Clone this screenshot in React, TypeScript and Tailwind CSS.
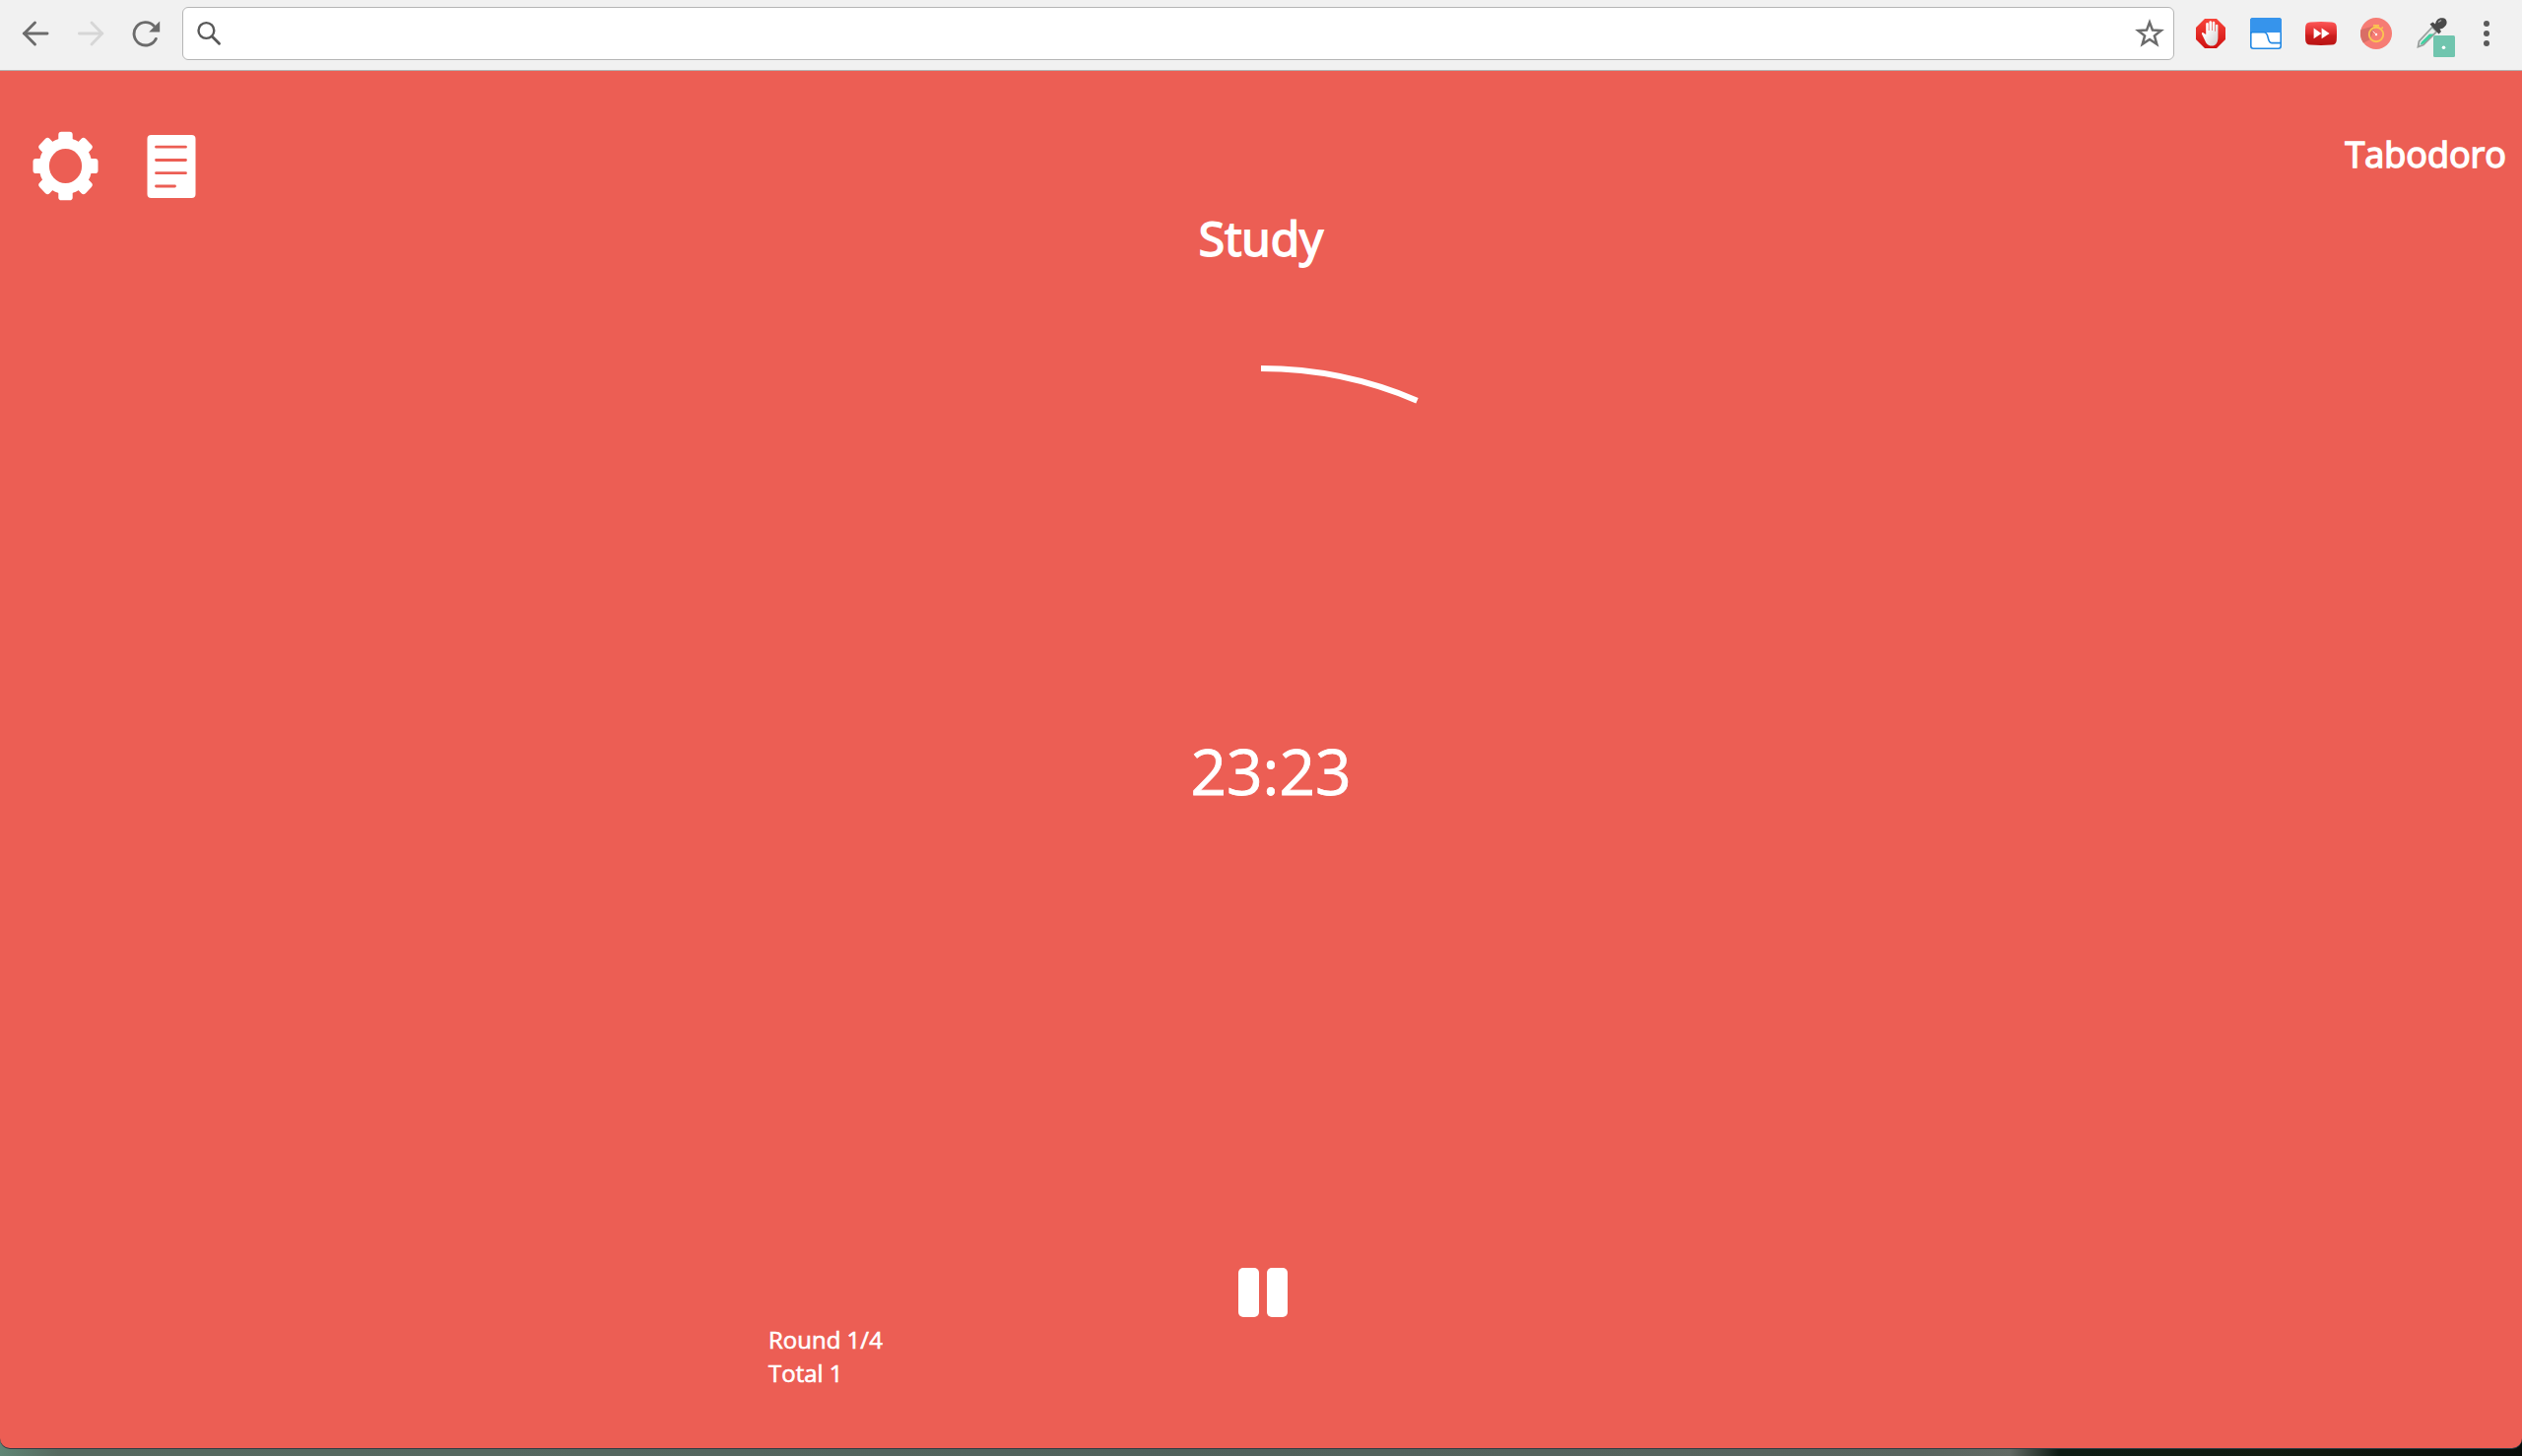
import React from "react";

function NavIcons() {
  return (
    <div className="flex items-center gap-[28px] pl-[22px]">
      <svg width="28" height="28" viewBox="0 0 28 28" fill="none" stroke="#6b6b6b" strokeWidth="2.9">
        <path d="M2.5 14H26" strokeLinecap="round" />
        <path d="M13.5 3L2.6 14L13.5 25" strokeLinecap="round" />
      </svg>
      <svg width="28" height="28" viewBox="0 0 28 28" fill="none" stroke="#d6d6d6" strokeWidth="2.9">
        <path d="M2.4 14H25.5" strokeLinecap="round" />
        <path d="M15 3L25.6 14L15 25" strokeLinecap="round" />
      </svg>
      <svg width="30" height="28" viewBox="0 0 30 28" fill="none">
        <path d="M24.3 19.4A11.7 11.7 0 1 1 22.2 6.2" stroke="#6b6b6b" strokeWidth="2.9" strokeLinecap="round" />
        <path d="M28.2 1.4V12.4H17.2Z" fill="#6b6b6b" />
      </svg>
    </div>
  );
}

function AddressBar() {
  return (
    <div className="ml-[21px] flex h-[54px] w-[2022px] items-center justify-between rounded-md border border-[#b5b5b5] bg-white pr-[9px] pl-[13px]">
      <svg width="26" height="26" viewBox="0 0 26 26" fill="none" stroke="#585858" strokeLinecap="round">
        <circle cx="10.4" cy="10" r="7.9" strokeWidth="2.4" />
        <path d="M16.5 16.2L23.5 23.2" strokeWidth="2.9" />
      </svg>
      <svg width="30" height="30" viewBox="0 0 30 30">
        <path
          d="M15 3.6L18 11.6L26.6 12L19.9 17.4L22.3 25.8L15 21L7.7 25.8L10.1 17.4L3.4 12L12 11.6Z"
          fill="none"
          stroke="#6b6b6b"
          strokeWidth="2.5"
        />
      </svg>
    </div>
  );
}

function Extensions() {
  return (
    <div className="flex items-center pl-[22px]">
      <svg width="30" height="32" viewBox="0 0 30 32">
        <defs>
          <linearGradient id="stop" x1="0" y1="0" x2="0" y2="1">
            <stop offset="0" stopColor="#f8453b" />
            <stop offset="1" stopColor="#cf1111" />
          </linearGradient>
          <linearGradient id="hand" x1="0" y1="0" x2="1" y2="1">
            <stop offset="0.3" stopColor="#ffffff" />
            <stop offset="1" stopColor="#cfcfcf" />
          </linearGradient>
        </defs>
        <path d="M9 1H21L30 10V22L21 31H9L0 22V10Z" fill="url(#stop)" />
        <path
          d="M10.2 17V6.3a1.3 1.3 0 0 1 2.6 0V13h.6V4.2a1.4 1.4 0 0 1 2.7 0V13h.6V5a1.3 1.3 0 0 1 2.6 0v8.7h.6V7.6a1.3 1.3 0 0 1 2.5 0V20c0 5-2 8.6-6.5 8.6c-4 0-5.5-2.4-7-6l-2.8-5.8c-.7-1.500 1-2.300 2-1.100z"
          fill="url(#hand)"
        />
      </svg>
      <svg className="ml-[25px]" width="32" height="32" viewBox="0 0 32 32">
        <rect x="0.8" y="0.8" width="30.4" height="30.4" rx="2.5" fill="#fff" stroke="#2389e4" strokeWidth="1.6" />
        <path d="M0 15V3a3 3 0 0 1 3-3h26a3 3 0 0 1 3 3v12z" fill="#3694ec" />
        <path d="M1 16V14.8H14C20 14.8 16.500 25.600 22 25.600H31" fill="none" stroke="#2389e4" strokeWidth="1.6" />
      </svg>
      <svg className="ml-[24px]" width="32" height="32" viewBox="0 0 32 32">
        <defs>
          <linearGradient id="skip" x1="0" y1="0" x2="0" y2="1">
            <stop offset="0" stopColor="#fd5656" />
            <stop offset="0.5" stopColor="#dc2a2a" />
            <stop offset="0.6" stopColor="#cb1d1d" />
            <stop offset="1" stopColor="#b91313" />
          </linearGradient>
        </defs>
        <path d="M5 4.400Q16 3.800 27 4.400Q31.500 4.800 31.800 9Q32.200 16 31.800 23Q31.500 27.200 27 27.600Q16 28.200 5 27.600Q.5 27.200.2 23Q-.2 16 .2 9Q.5 4.800 5 4.400Z" fill="url(#skip)" />
        <path d="M8.600 10.600L16.400 15.900L8.600 21.200ZM16.600 10.600L24.600 15.900L16.600 21.200Z" fill="#fff" />
      </svg>
      <svg className="ml-[24px]" width="32" height="32" viewBox="0 0 32 32">
        <circle cx="16" cy="16" r="16" fill="#f67c74" />
        <path d="M15 8L10 22L3 25.500A16 16 0 0 1 .5 12Z" fill="#d96e66" />
        <circle cx="16" cy="17" r="7.200" fill="none" stroke="#fbc551" strokeWidth="1.9" />
        <path d="M13 7.800H19M16 8V10M21.500 10.800L22.800 9.500" stroke="#fbc551" strokeWidth="1.7" />
        <path d="M12.500 13.500L16 17" stroke="#fff" strokeWidth="0.8" />
        <circle cx="16" cy="17" r="1.200" fill="#fff" />
      </svg>
      <svg className="mt-[7px] ml-[25px]" width="40" height="40" viewBox="0 0 40 40">
        <path d="M1.500 29.500L2.500 24L16 9.500L20.500 14L7 27.500Z" fill="#e9eeec" stroke="#9a9f9d" strokeWidth="1.8" />
        <path d="M3.500 27.500L5 24.500L13 16.500H17.500L7 26.500Z" fill="#3fd0a0" />
        <path d="M13.500 6.500L16.500 4.500L19 6.500C20 .8 24 -.2 27 .3C31 1 31.700 6 29 8.500C27.500 10.500 25.500 11.500 23.500 11.500L25 14L22.500 16.500Z" fill="#4a4a4a" />
        <path d="M22 4.500L25 2.500" stroke="#a5a5a5" strokeWidth="1.5" />
        <rect x="17" y="18" width="22" height="22" rx="1.5" fill="#70c5ae" />
        <circle cx="27.500" cy="30.200" r="1.8" fill="#fff" />
      </svg>
      <div className="ml-[28px] flex flex-col gap-1">
        <span className="size-[6px] rounded-full bg-[#5a5a5a]" />
        <span className="size-[6px] rounded-full bg-[#5a5a5a]" />
        <span className="size-[6px] rounded-full bg-[#5a5a5a]" />
      </div>
    </div>
  );
}

function GearIcon() {
  return (
    <svg className="mt-[2px]" width="67" height="71" viewBox="-33.5 -35.5 67 71">
      <g fill="#fff" transform="scale(1 1.055)">
        {[0, 45, 90, 135].map((angle) => (
          <rect key={angle} x="-7.2" y="-33" width="14.4" height="66" rx="3" transform={`rotate(${angle})`} />
        ))}
      </g>
      <ellipse rx="27" ry="28.5" fill="#fff" />
      <ellipse rx="16.6" ry="17.5" fill="#ec5e54" />
    </svg>
  );
}

function NotesIcon() {
  return (
    <svg className="mt-[6px] ml-[49px]" width="50" height="64" viewBox="0 0 50 64">
      <rect x="0.5" width="49" height="64" rx="4" fill="#fff" />
      <path d="M9.500 12.200H39.500M9.500 25.500H39.500M9.500 38.700H39.500M9.500 52H28.500" stroke="#ec5e54" strokeWidth="2.8" strokeLinecap="round" />
    </svg>
  );
}

const RADIUS = 401;
const ELAPSED = 97 / 1500;

function Timer() {
  const angle = ELAPSED * 2 * Math.PI;
  const x = 406 + RADIUS * Math.sin(angle);
  const y = 406 - RADIUS * Math.cos(angle);
  return (
    <div className="mt-[94px] grid place-items-center">
      <svg className="col-start-1 row-start-1" width="812" height="812" viewBox="0 0 812 812" fill="none">
        <path d={`M406 5A${RADIUS} ${RADIUS} 0 0 1 ${x} ${y}`} stroke="#fff" strokeWidth="6" />
      </svg>
      <div className="col-start-1 row-start-1 pt-[16px] pl-5 text-[64px] leading-[88px] [-webkit-text-stroke:0.8px_white]">23:23</div>
    </div>
  );
}

export default function App() {
  return (
    <div className="flex h-[1478px] w-[2560px] flex-col overflow-hidden bg-[linear-gradient(90deg,#5f8675_0,#56695f_60px,#566860_500px,#50615b_1200px,#59655f_1950px,#626a64_2040px,#0d1c14_2090px,#111b10_2300px,#080c09_2560px)] font-['Open_Sans',sans-serif] text-white">
      <div className="flex h-[72px] shrink-0 items-center border-b border-[#b4b0b0] bg-[#f1f1f1] pb-[3px]">
        <NavIcons />
        <AddressBar />
        <Extensions />
      </div>
      <main className="flex h-[1398px] shrink-0 flex-col rounded-b-[10px] bg-[#ec5e54] shadow-[0_1px_0_#2c3c44]">
        <header className="flex h-[132px] items-start justify-between pt-[59px] pr-[16px] pl-[33px]">
          <div className="flex">
            <GearIcon />
            <NotesIcon />
          </div>
          <h3 className="text-[36px] leading-[51px] [-webkit-text-stroke:1.5px_white]">Tabodoro</h3>
        </header>
        <h2 className="mt-[5px] text-center text-[48px] leading-[66px] [-webkit-text-stroke:1.8px_white]">Study</h2>
        <Timer />
        <button className="mt-[106px] ml-[1256.5px] flex gap-[7.5px] self-start">
          <span className="h-[50px] w-[21.5px] rounded-[5px] bg-white" />
          <span className="h-[50px] w-[21.5px] rounded-[5px] bg-white" />
        </button>
        <div className="mt-[6px] ml-[780px] text-2xl leading-[34px] [-webkit-text-stroke:0.6px_white]">
          <div>Round 1/4</div>
          <div>Total 1</div>
        </div>
      </main>
    </div>
  );
}
